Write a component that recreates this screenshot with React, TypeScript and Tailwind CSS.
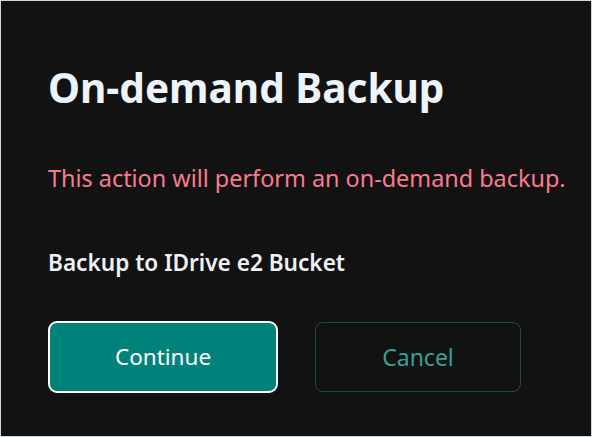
import React from "react";

export default function App() {
  return (
    <div
      className="w-[592px] h-[437px] border border-[#c9d9dc] bg-[#121212] flex flex-col pl-[47px]"
      style={{ fontFamily: '"Noto Sans", "Open Sans", sans-serif' }}
    >
      <h1 className="mt-[63px] text-[40.5px] leading-[48px] font-bold text-[#eef4fc]">
        On-demand Backup
      </h1>
      <p className="mt-[51px] text-[23.4px] leading-[30px] text-[#fa7b8e]">
        This action will perform an on-demand backup.
      </p>
      <p className="mt-[55px] text-[22.6px] leading-[30px] font-semibold text-[#eef2f8]">
        Backup to IDrive e2 Bucket
      </p>
      <div className="mt-[43px] flex gap-[37px]">
        <button className="w-[230px] h-[72px] rounded-[9px] border-2 border-white bg-[#00827a] text-[22.5px] text-white">
          Continue
        </button>
        <button className="mt-px w-[206px] h-[70px] rounded-[8px] border border-[#1d4a47] bg-transparent text-[23px] text-[#3a9f95]">
          Cancel
        </button>
      </div>
    </div>
  );
}
